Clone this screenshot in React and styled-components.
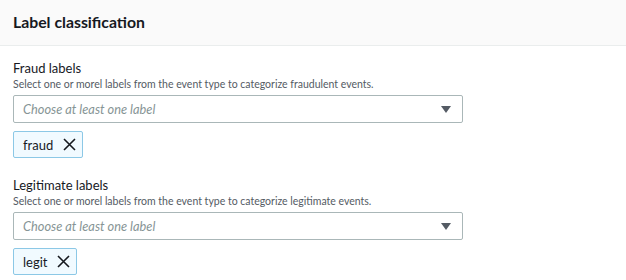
import styled, { createGlobalStyle } from 'styled-components';

const Global = createGlobalStyle`
	body {
		margin: 0;
		background: #ffffff;
		font-family: Lato, 'Liberation Sans', sans-serif;
		color: #16191f;
	}
`;

const fields = [
	{
		label: 'Fraud labels',
		description:
			'Select one or morel labels from the event type to categorize fraudulent events.',
		tag: 'fraud',
	},
	{
		label: 'Legitimate labels',
		description:
			'Select one or morel labels from the event type to categorize legitimate events.',
		tag: 'legit',
	},
];

const CloseIcon = () => (
	<svg width='13' height='13' viewBox='0 0 13 13' aria-hidden='true'>
		<path d='M1 1 L12 12 M12 1 L1 12' stroke='#16191f' strokeWidth='1.6' fill='none' />
	</svg>
);

const Caret = () => (
	<svg width='10' height='7' viewBox='0 0 10 7' aria-hidden='true'>
		<path d='M0 0 H10 L5 7 Z' fill='#545b64' />
	</svg>
);

export default () => (
	<>
		<Global />
		<Panel>
			<Header>
				<h2>Label classification</h2>
			</Header>
			<Body>
				{fields.map((f) => (
					<Field key={f.tag}>
						<Label>{f.label}</Label>
						<Description>{f.description}</Description>
						<Select>
							<span>Choose at least one label</span>
							<Caret />
						</Select>
						<Tag>
							{f.tag}
							<CloseIcon />
						</Tag>
					</Field>
				))}
			</Body>
		</Panel>
	</>
);

const Panel = styled.div`
	width: 626px;
	height: 280px;
	overflow: hidden;
`;

const Header = styled.div`
	height: 46px;
	background-color: #fafafa;
	border-bottom: 1px solid #eaeded;
	padding: 0 13px;
	display: flex;
	align-items: center;
	box-sizing: border-box;

	h2 {
		margin: 0 0 2px;
		font-size: 15.8px;
		font-weight: 700;
	}
`;

const Body = styled.div`
	padding: 14px 13px 0;
	display: flex;
	flex-direction: column;
	gap: 19px;
`;

const Field = styled.div`
	display: flex;
	flex-direction: column;
	align-items: flex-start;
`;

const Label = styled.div`
	font-size: 13px;
	line-height: 17px;
`;

const Description = styled.div`
	font-size: 10.5px;
	line-height: 14px;
	color: #545b64;
	margin-bottom: 4px;
`;

const Select = styled.div`
	width: 450px;
	height: 28px;
	box-sizing: border-box;
	border: 1px solid #aab7b8;
	border-radius: 2px;
	padding: 0 11px 0 9px;
	display: flex;
	align-items: center;
	justify-content: space-between;

	span {
		font-size: 12.8px;
		font-style: italic;
		color: #879596;
	}
`;

const Tag = styled.div`
	margin-top: 8px;
	height: 27px;
	box-sizing: border-box;
	padding: 0 6px 0 9px;
	display: flex;
	align-items: center;
	gap: 10px;
	font-size: 13px;
	background-color: #f1faff;
	border: 1px solid #8cc8e6;
	border-radius: 2px;
`;
